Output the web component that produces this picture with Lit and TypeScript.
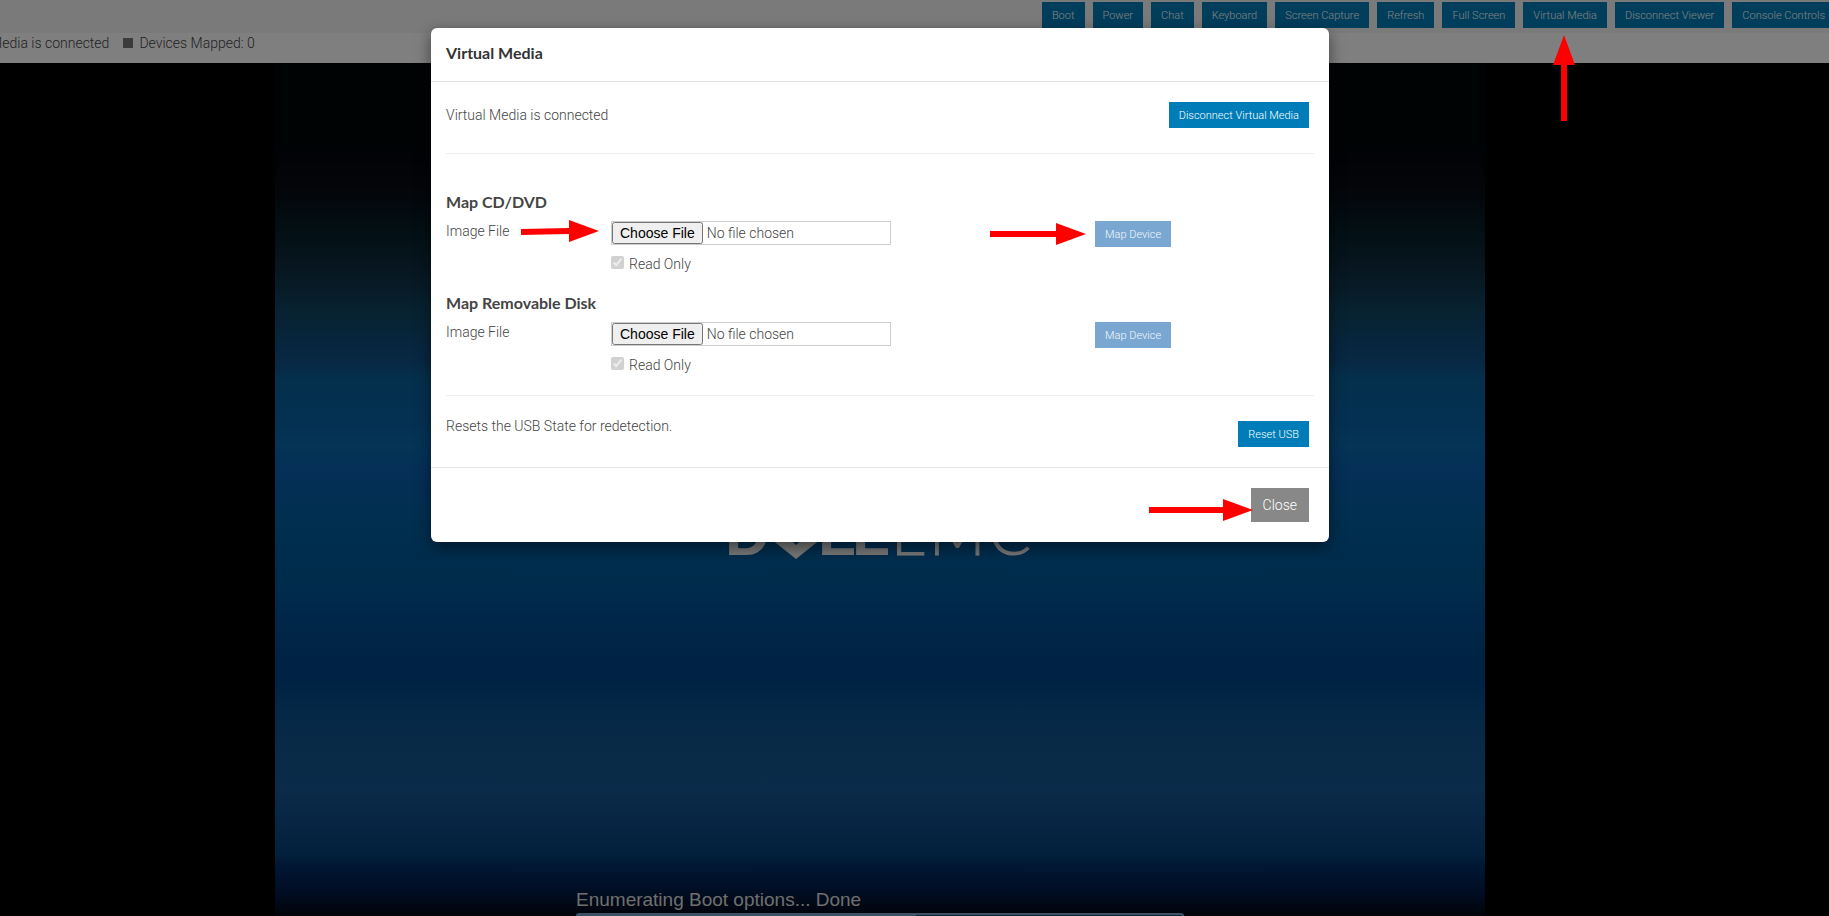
import { LitElement, html, css, svg } from "lit";
import { customElement, property } from "lit/decorators.js";

const TOOLBAR = [
  "Boot",
  "Power",
  "Chat",
  "Keyboard",
  "Screen Capture",
  "Refresh",
  "Full Screen",
  "Virtual Media",
  "Disconnect Viewer",
  "Console Controls",
];

const buttonStyles = css`
  button {
    font: 300 11px/25px Roboto, sans-serif;
    color: #fff;
    background: #007db8;
    border: 0;
    border-radius: 0;
    padding: 1px 10px 0;
    margin: 0;
    height: 26px;
    white-space: nowrap;
  }
  button:disabled {
    background: #7aa7d2;
    color: #f2f7fb;
  }
`;

@customElement("console-screen")
export class ConsoleScreen extends LitElement {
  static styles = css`
    :host {
      display: flex;
      justify-content: center;
      min-height: 0;
      background: #000;
    }
    .screen {
      width: 1210px;
      display: flex;
      flex-direction: column;
      align-items: center;
      background: linear-gradient(
        to bottom,
        #000608 0%,
        #000608 9%,
        #02060e 11%,
        #080c14 15%,
        #06202a 20%,
        #0e2c40 24%,
        #0e4460 29%,
        #105088 35%,
        #08609a 37%,
        #0862a4 42%,
        #0868ac 45%,
        #0a5eae 48%,
        #005e9e 54%,
        #005898 61%,
        #005094 64%,
        #004488 72%,
        #08508c 76%,
        #145690 81%,
        #145692 85%,
        #104c86 89%,
        #043e78 93%,
        #003068 94%,
        #001c48 97%,
        #000814 100%
      );
    }
    .logo {
      flex: none;
      margin-top: 440px;
      fill: #eee;
    }
    .heavy {
      font: 700 62px "Liberation Sans", sans-serif;
    }
    .thin {
      font: 300 62px Lato, sans-serif;
      stroke: #eee;
      stroke-width: 1px;
    }
    .boot {
      width: 608px;
      margin-top: auto;
    }
    .message {
      font: 19px/26px "Liberation Sans", sans-serif;
      color: #ddd;
    }
    .bar {
      height: 3px;
      box-sizing: border-box;
      border: 2px solid #74a2cc;
      border-bottom: 0;
      border-radius: 3px 3px 0 0;
      background: #184866;
    }
    .fill {
      width: 56%;
      height: 1px;
      background: #74a2cc;
    }
  `;

  render() {
    return html`
      <div class="screen">
        <svg class="logo" width="304" height="60" viewBox="0 0 304 60" role="img" aria-label="Dell EMC">
          ${svg`
            <text class="heavy" x="-3" y="52">D</text>
            <path d="M68 56 L38 32 L58 32 L68 42 L88 24 L98 32 Z" />
            <text class="heavy" x="90 124" y="52">LL</text>
            <text class="thin" x="163 201 261" y="52">EMC</text>
          `}
        </svg>
        <div class="boot">
          <div class="message">Enumerating Boot options... Done</div>
          <div class="bar"><div class="fill"></div></div>
        </div>
      </div>
    `;
  }
}

@customElement("device-mapper")
export class DeviceMapper extends LitElement {
  @property() heading = "";

  static styles = [
    buttonStyles,
    css`
      :host {
        display: block;
      }
      h3 {
        font: 700 16px/24px Lato, sans-serif;
        color: #444;
        margin: 0 0 7px;
      }
      .row {
        display: grid;
        grid-template-columns: 165fr 484fr 219fr;
        align-items: start;
        height: 70px;
      }
      label {
        line-height: 20px;
      }
      input[type="file"] {
        display: block;
        box-sizing: border-box;
        width: 280px;
        max-width: 100%;
        height: 24px;
        border: 1px solid #ccc;
        margin: 0 0 11px;
        padding: 0;
        font: inherit;
        line-height: 20px;
        color: #444;
      }
      input[type="file"]::file-selector-button {
        font: 14px/18px "Liberation Sans", Arial, sans-serif;
        height: 22px;
      }
      .check {
        display: flex;
        align-items: flex-start;
        gap: 5px;
      }
      .check label {
        line-height: 16px;
      }
      input[type="checkbox"] {
        width: 13px;
        height: 13px;
        margin: 0;
      }
    `,
  ];

  render() {
    return html`
      <h3>${this.heading}</h3>
      <div class="row">
        <label for="file">Image File</label>
        <div>
          <input id="file" type="file" />
          <div class="check">
            <input id="readonly" type="checkbox" checked disabled />
            <label for="readonly">Read Only</label>
          </div>
        </div>
        <div><button disabled>Map Device</button></div>
      </div>
    `;
  }
}

@customElement("media-dialog")
export class MediaDialog extends LitElement {
  static styles = [
    buttonStyles,
    css`
      :host {
        display: block;
        box-sizing: border-box;
        width: 898px;
        background: #fff;
        border-radius: 6px;
        box-shadow: 0 5px 15px rgba(0, 0, 0, 0.5);
      }
      h2 {
        font: 700 16px/24px Lato, sans-serif;
        color: #333;
        margin: 0;
        padding: 13px 15px 16px;
        border-bottom: 1px solid #e5e5e5;
      }
      .body {
        padding: 20px 15px;
      }
      .line {
        display: flex;
        justify-content: space-between;
        align-items: flex-start;
        padding-right: 5px;
        line-height: 26px;
      }
      .divider {
        border: 0;
        border-top: 1px solid #eee;
        margin: 25px 0 36px;
      }
      .divider.low {
        margin: 3px 0 25px;
      }
      .reset {
        line-height: 10px;
      }
      footer {
        display: flex;
        justify-content: flex-end;
        padding: 20px;
        border-top: 1px solid #e5e5e5;
      }
      footer button {
        font-size: 14px;
        height: 34px;
        padding: 0 12px;
        background: #888;
      }
    `,
  ];

  render() {
    return html`
      <h2>Virtual Media</h2>
      <div class="body">
        <div class="line">
          <span>Virtual Media is connected</span>
          <button>Disconnect Virtual Media</button>
        </div>
        <hr class="divider" />
        <device-mapper heading="Map CD/DVD"></device-mapper>
        <device-mapper heading="Map Removable Disk"></device-mapper>
        <hr class="divider low" />
        <div class="line">
          <span class="reset">Resets the USB State for redetection.</span>
          <button>Reset USB</button>
        </div>
      </div>
      <footer><button>Close</button></footer>
    `;
  }
}

@customElement("app-root")
export class AppRoot extends LitElement {
  static styles = [
    buttonStyles,
    css`
      :host {
        display: block;
        position: relative;
        height: 100vh;
        overflow: hidden;
        font: 300 14px/20px Roboto, sans-serif;
        color: #444;
      }
      .page {
        position: relative;
        height: 100%;
        margin: 0 -6px 0 -75px;
        display: flex;
        flex-direction: column;
      }
      .toolbar {
        display: flex;
        justify-content: flex-end;
        gap: 8px;
        padding: 2px 0 5px;
        background: #f4f4f4;
      }
      .status {
        display: flex;
        align-items: center;
        padding: 0 22px 10px;
        background: #fff;
      }
      .square {
        width: 10px;
        height: 10px;
        margin: 0 6px 0 14px;
        background: #777;
      }
      console-screen {
        flex: 1;
      }
      .backdrop {
        position: absolute;
        inset: 0;
        display: flex;
        justify-content: center;
        align-items: flex-start;
        padding-top: 28px;
        background: rgba(0, 0, 0, 0.5);
      }
      .arrows {
        position: absolute;
        left: 0;
        top: 0;
        pointer-events: none;
        fill: #f00;
      }
    `,
  ];

  render() {
    return html`
      <div class="page">
        <nav class="toolbar">${TOOLBAR.map((name) => html`<button>${name}</button>`)}</nav>
        <div class="status">
          <span>Virtual Media is connected</span>
          <span class="square"></span>
          <span>Devices Mapped: 0</span>
        </div>
        <console-screen></console-screen>
        <div class="backdrop"><media-dialog></media-dialog></div>
      </div>
      <svg class="arrows" width="1829" height="916" viewBox="0 0 1829 916" aria-hidden="true">
        <path d="M1564 35 L1575 65 H1567 V121 H1561 V65 H1553 Z" />
        <path d="M599 231 L569 242 V234 L521 235 V229 L569 228 V220 Z" />
        <path d="M1086 234 L1056 245 V237 H990 V231 H1056 V223 Z" />
        <path d="M1253 510 L1223 521 V513 H1149 V507 H1223 V499 Z" />
      </svg>
    `;
  }
}
